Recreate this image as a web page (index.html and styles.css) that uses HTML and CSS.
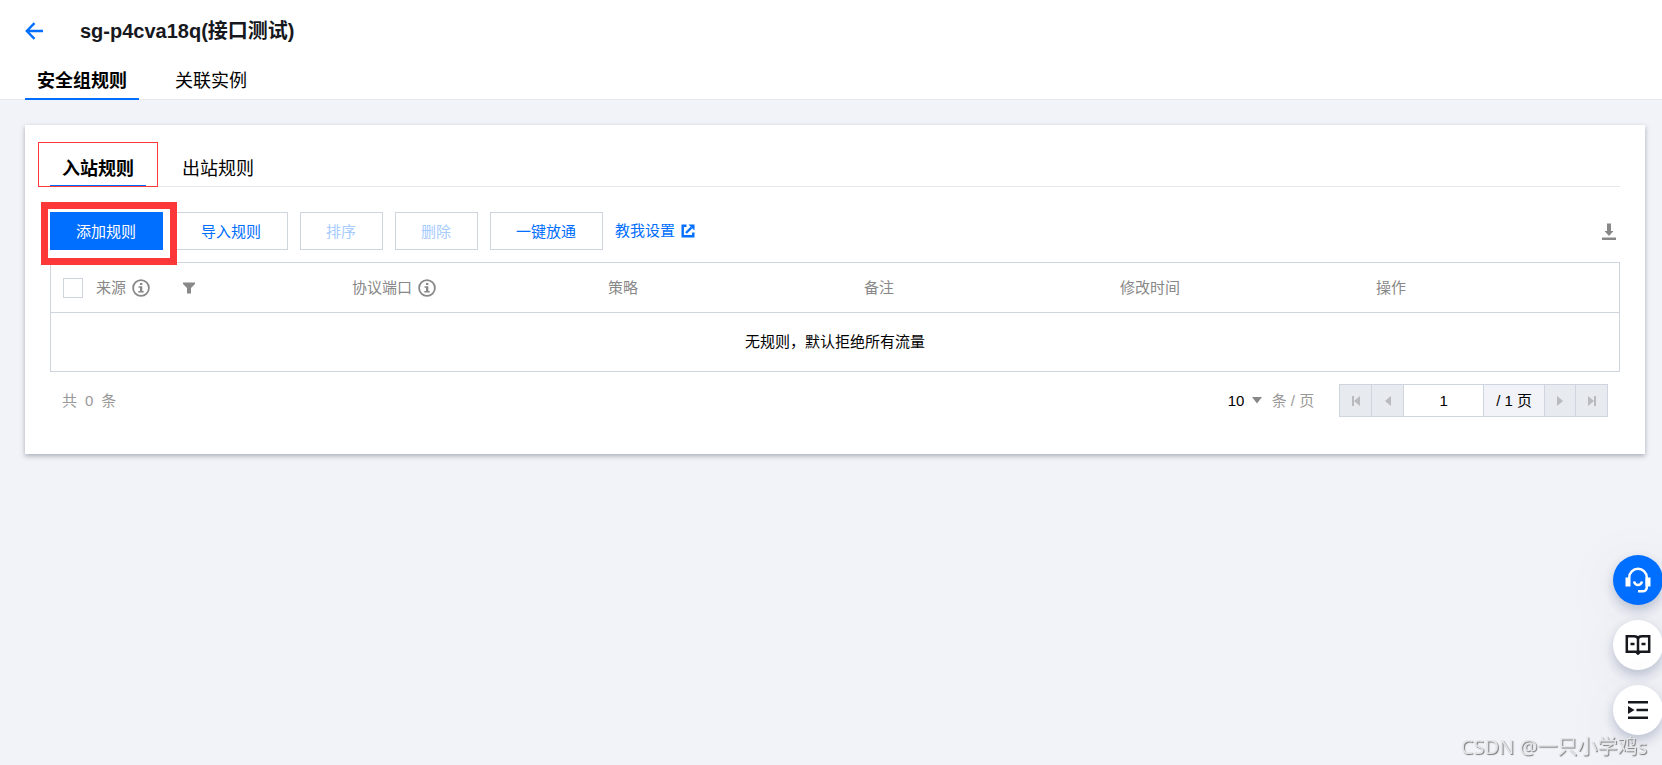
FILE: index.html
```html
<!DOCTYPE html>
<html lang="zh-CN">
<head>
<meta charset="utf-8">
<title>sg-p4cva18q(接口测试)</title>
<link rel="stylesheet" href="styles.css">
</head>
<body>
<header class="header">
  <div class="title-row">
    <a class="back" href="#" aria-label="返回">
      <svg width="18" height="18" viewBox="0 0 18 18" fill="none" stroke="currentColor" stroke-width="2.4"><path d="M9.5 1.2 1.8 9l7.7 7.8M2 9h16"/></svg>
    </a>
    <h1 class="title">sg-p4cva18q(接口测试)</h1>
  </div>
  <nav class="tabs">
    <button class="tab active" type="button">安全组规则</button>
    <button class="tab" type="button">关联实例</button>
  </nav>
</header>

<main class="main">
  <section class="card">
    <div class="tabs inner-tabs">
      <div class="marked">
        <button class="tab active" type="button">入站规则</button>
        <span class="mark thin"></span>
      </div>
      <button class="tab" type="button">出站规则</button>
    </div>

    <div class="toolbar">
      <div class="marked">
        <button class="btn primary" type="button">添加规则</button>
        <span class="mark thick"></span>
      </div>
      <button class="btn" type="button">导入规则</button>
      <button class="btn" type="button" disabled>排序</button>
      <button class="btn" type="button" disabled>删除</button>
      <button class="btn" type="button">一键放通</button>
      <a class="help" href="#">教我设置
        <svg width="14" height="14" viewBox="0 0 14 14" fill="none" stroke="currentColor"><path stroke-width="2.4" d="M5.500 1.700H1.700v10.600h10.600V8.500"/><path stroke-width="2.400" d="M5 9 10.500 3.500"/><path fill="currentColor" stroke="none" d="M7.500 0.500h6v6z"/></svg>
      </a>
      <button class="download" type="button" aria-label="下载">
        <svg width="14" height="18" viewBox="0 0 14 18" fill="currentColor"><path d="M5 0.500h4v7.500h2.500L7 13 2.500 8H5zM0 14.500h14v2.500H0z"/></svg>
      </button>
    </div>

    <table class="rules">
      <thead>
        <tr>
          <th class="check"><input class="box" type="checkbox" aria-label="全选"></th>
          <th>
            <div class="cell">来源
              <svg class="info" width="18" height="18" viewBox="0 0 18 18"><circle cx="9" cy="9" r="7.900" fill="none" stroke="currentColor" stroke-width="1.800"/><path fill="currentColor" d="M8 4h2.300v2H8zM6.500 7.300h3.800v4.700h1.400v1.500H6.300V12H8V8.700H6.500z"/></svg>
              <button class="filter" type="button" aria-label="筛选"><svg width="12" height="12" viewBox="0 0 12 12" fill="currentColor"><path d="M0 0.500h12v1.500L8 6v5.500H4V6L0 2z"/></svg></button>
            </div>
          </th>
          <th>
            <div class="cell">协议端口
              <svg class="info" width="18" height="18" viewBox="0 0 18 18"><circle cx="9" cy="9" r="7.900" fill="none" stroke="currentColor" stroke-width="1.800"/><path fill="currentColor" d="M8 4h2.300v2H8zM6.500 7.300h3.800v4.700h1.400v1.500H6.300V12H8V8.700H6.500z"/></svg>
            </div>
          </th>
          <th>策略</th>
          <th>备注</th>
          <th>修改时间</th>
          <th>操作</th>
        </tr>
      </thead>
      <tbody>
        <tr><td class="empty" colspan="7">无规则，默认拒绝所有流量</td></tr>
      </tbody>
    </table>

    <footer class="footer">
      <span class="total"><span>共</span><span>0</span><span>条</span></span>
      <label class="page-size">
        <select class="size"><option>10</option></select>
        <svg class="caret" width="10" height="7" viewBox="0 0 10 7" fill="currentColor"><path d="M0 0h10L5 6.500z"/></svg>
        <span class="per">条 / 页</span>
      </label>
      <div class="pager">
        <button class="nav" type="button" disabled aria-label="首页"><svg width="10" height="12" viewBox="0 0 10 12" fill="currentColor"><path d="M1 1h2v10H1zM9 1v10L3 6z"/></svg></button>
        <button class="nav" type="button" disabled aria-label="上一页"><svg width="10" height="12" viewBox="0 0 10 12" fill="currentColor"><path d="M8 1v10L2 6z"/></svg></button>
        <input class="page" type="text" value="1" aria-label="页码">
        <span class="pages">/ 1 页</span>
        <button class="nav" type="button" disabled aria-label="下一页"><svg width="10" height="12" viewBox="0 0 10 12" fill="currentColor"><path d="M2 1v10l6-5z"/></svg></button>
        <button class="nav" type="button" disabled aria-label="末页"><svg width="10" height="12" viewBox="0 0 10 12" fill="currentColor"><path d="M7 1h2v10H7zM1 1v10l6-5z"/></svg></button>
      </div>
    </footer>
  </section>
</main>

<aside class="floaters">
  <button class="round blue" type="button" aria-label="客服">
    <svg width="26" height="26" viewBox="0 0 26 26" fill="none" stroke="currentColor" stroke-width="2.500"><path d="M4.200 11V10.500a8.800 8.800 0 0 1 17.600 0V20a4 4 0 0 1-4 4.300H13"/><path d="M9 14.500q1 3.500 4 3.500t4-3.500"/><path fill="currentColor" stroke="none" d="M0.500 10.500h5v9h-5zM20.500 10.500h5v9h-5z"/></svg>
  </button>
  <button class="round" type="button" aria-label="文档">
    <svg width="26" height="22" viewBox="0 0 26 22" fill="none" stroke="currentColor" stroke-width="2.500"><path d="M1.800 2.200h7.200q4 0 4 3 0-3 4-3h7.200v15.600H15l-2 1.800-2-1.800H1.800zM13 4.500V21M5.500 10h4M16.500 10h4"/></svg>
  </button>
  <button class="round" type="button" aria-label="展开">
    <svg width="22" height="20" viewBox="0 0 22 20" fill="currentColor"><path d="M1 1h20v2.400H1zM1 16.500h20v2.400H1zM9.500 8.800H21v2.400H9.500zM1 6v8l6.500-4z"/></svg>
  </button>
</aside>
<div class="watermark">CSDN @一只小学鸡s</div>
</body>
</html>
```

FILE: styles.css
```css
* {
  box-sizing: border-box;
}

body {
  margin: 0;
  min-height: 100vh;
  background: #f2f3f8;
  color: #000;
  font: 15px/20px "Liberation Sans", "Noto Sans CJK SC", sans-serif;
}

button,
input,
select {
  margin: 0;
  padding: 0;
  border: 0;
  border-radius: 0;
  background: none;
  color: inherit;
  font: inherit;
}

svg {
  display: block;
  flex: none;
}

.header {
  padding: 0 25px;
  border-bottom: 1px solid #e5e8ed;
  background: #fff;
}

.title-row {
  display: flex;
  align-items: center;
  gap: 37px;
  height: 62px;
}

.back {
  color: #006eff;
}

.title {
  margin: 0;
  color: #16181d;
  font-size: 20px;
  line-height: 28px;
}

.tabs {
  display: flex;
  gap: 24px;
}

.tab {
  margin-bottom: -1px;
  padding: 5px 12px 3px;
  border-bottom: 2px solid transparent;
  font-size: 18px;
  line-height: 28px;
}

.header .tab {
  height: 38px;
}

.tab.active {
  border-color: #006eff;
  font-weight: bold;
}

.main {
  padding: 25px 17px 25px 25px;
}

.card {
  padding: 25px 25px 37px;
  background: #fff;
  box-shadow: 0 2px 5px rgba(30, 40, 60, 0.35);
}

.inner-tabs {
  border-bottom: 1px solid #e5e8ed;
}

.inner-tabs .tab {
  height: 37px;
}

.inner-tabs .marked {
  margin-bottom: -1px;
}

.marked {
  position: relative;
  display: flex;
}

.marked .tab {
  margin-bottom: 0;
}

.mark {
  position: absolute;
  z-index: 1;
  pointer-events: none;
}

.mark.thin {
  inset: -8px -12px 0;
  border: 1px solid #fc3838;
}

.mark.thick {
  inset: -10px -14px -15px -9px;
  border: 7px solid #fc3838;
}

.toolbar {
  display: flex;
  align-items: center;
  gap: 12px;
  margin: 25px 0 12px;
}

.btn {
  height: 38px;
  padding: 1px 26px 0 25px;
  border: 1px solid #cfd5de;
  background: #fff;
  color: #006eff;
}

.btn.primary {
  border-color: #006eff;
  background: #006eff;
  color: #fff;
}

.btn:disabled {
  color: #a6cbff;
}

.help {
  display: flex;
  align-items: center;
  gap: 6px;
  color: #006eff;
  text-decoration: none;
}

.download {
  margin: 2px 4px 0 auto;
  color: #888;
}

.rules {
  width: 100%;
  border: 1px solid #cfd5de;
  border-spacing: 0;
  table-layout: fixed;
}

.rules th {
  height: 50px;
  padding: 0 13px;
  border-bottom: 1px solid #cfd5de;
  color: #888;
  font-weight: normal;
  text-align: left;
}

.rules .check {
  width: 32px;
  padding-right: 0;
  padding-left: 12px;
}

.box {
  display: block;
  width: 20px;
  height: 20px;
  appearance: none;
  border: 1px solid #cfd5de;
  background: #fff;
}

.cell {
  display: flex;
  align-items: center;
  gap: 6px;
}

.filter {
  margin-left: 27px;
}

.empty {
  height: 58px;
  padding: 0;
  text-align: center;
}

.footer {
  display: flex;
  align-items: center;
  margin-top: 12px;
  padding: 0 12px;
  color: #888;
}

.total {
  display: flex;
  gap: 8px;
  margin-right: auto;
  color: #999;
}

.page-size {
  display: flex;
  align-items: center;
  margin-right: 25px;
}

.size {
  width: 34px;
  margin-right: -10px;
  appearance: none;
  color: #000;
}

.per {
  margin-left: 10px;
  color: #999;
}

.pager {
  display: flex;
  height: 33px;
  border: 1px solid #cfd5de;
  color: #000;
}

.pager > * + * {
  border-left: 1px solid #cfd5de;
}

.nav {
  display: grid;
  place-items: center;
  width: 31px;
  background: #e7eaef;
  color: #b8babe;
}

.nav + .nav {
  width: 32px;
}

.page {
  width: 80px;
  text-align: center;
}

.pages {
  padding: 6px 12px;
  background: #f2f3f8;
}

.floaters {
  position: fixed;
  right: -1px;
  bottom: 30px;
  display: grid;
  gap: 15px;
}

.round {
  display: grid;
  place-items: center;
  width: 50px;
  height: 50px;
  border-radius: 50%;
  background: #fff;
  color: #16181d;
  box-shadow: 0 5px 12px rgba(55, 75, 115, 0.28), 0 10px 60px rgba(55, 75, 115, 0.08);
}

.round.blue {
  background: #006eff;
  color: #fff;
}

.watermark {
  position: fixed;
  right: 15px;
  bottom: 4px;
  color: #e4e5e8;
  font: 20px/28px "Noto Sans", "Noto Sans CJK SC", sans-serif;
  text-shadow: 1px 1px 1px #777;
}
```
